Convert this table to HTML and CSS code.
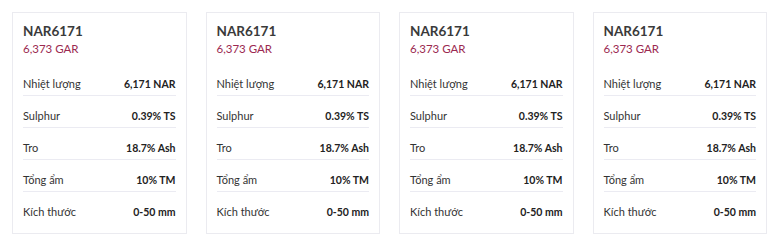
FILE: index.html
```html
<!DOCTYPE html>
<html lang="vi">
<head>
<meta charset="utf-8">
<link rel="stylesheet" href="styles.css">
</head>
<body>
<div class="grid">
  <div class="card">
    <div class="title">NAR6171</div>
    <div class="sub">6,373 GAR</div>
    <div class="rows">
      <div class="row"><span class="k">Nhiệt lượng</span><span class="v">6,171 NAR</span></div>
      <div class="row"><span class="k">Sulphur</span><span class="v">0.39% TS</span></div>
      <div class="row"><span class="k">Tro</span><span class="v">18.7% Ash</span></div>
      <div class="row"><span class="k">Tổng ẩm</span><span class="v">10% TM</span></div>
      <div class="row"><span class="k">Kích thước</span><span class="v">0-50 mm</span></div>
    </div>
  </div>
  <div class="card">
    <div class="title">NAR6171</div>
    <div class="sub">6,373 GAR</div>
    <div class="rows">
      <div class="row"><span class="k">Nhiệt lượng</span><span class="v">6,171 NAR</span></div>
      <div class="row"><span class="k">Sulphur</span><span class="v">0.39% TS</span></div>
      <div class="row"><span class="k">Tro</span><span class="v">18.7% Ash</span></div>
      <div class="row"><span class="k">Tổng ẩm</span><span class="v">10% TM</span></div>
      <div class="row"><span class="k">Kích thước</span><span class="v">0-50 mm</span></div>
    </div>
  </div>
  <div class="card">
    <div class="title">NAR6171</div>
    <div class="sub">6,373 GAR</div>
    <div class="rows">
      <div class="row"><span class="k">Nhiệt lượng</span><span class="v">6,171 NAR</span></div>
      <div class="row"><span class="k">Sulphur</span><span class="v">0.39% TS</span></div>
      <div class="row"><span class="k">Tro</span><span class="v">18.7% Ash</span></div>
      <div class="row"><span class="k">Tổng ẩm</span><span class="v">10% TM</span></div>
      <div class="row"><span class="k">Kích thước</span><span class="v">0-50 mm</span></div>
    </div>
  </div>
  <div class="card">
    <div class="title">NAR6171</div>
    <div class="sub">6,373 GAR</div>
    <div class="rows">
      <div class="row"><span class="k">Nhiệt lượng</span><span class="v">6,171 NAR</span></div>
      <div class="row"><span class="k">Sulphur</span><span class="v">0.39% TS</span></div>
      <div class="row"><span class="k">Tro</span><span class="v">18.7% Ash</span></div>
      <div class="row"><span class="k">Tổng ẩm</span><span class="v">10% TM</span></div>
      <div class="row"><span class="k">Kích thước</span><span class="v">0-50 mm</span></div>
    </div>
  </div>
</div>
</body>
</html>
```
FILE: styles.css
```css
html, body {
  margin: 0;
  padding: 0;
  background: #ffffff;
}
body {
  font-family: "Lato", "Open Sans", "Liberation Sans", sans-serif;
  color: #222;
}
.grid {
  display: grid;
  grid-template-columns: repeat(4, 1fr);
  gap: 19px;
  padding: 12px 11px 0 12px;
}
.card {
  border: 1px solid #ebebf0;
  padding: 8px 10px 10px 10px;
}
.title {
  font-size: 13.5px;
  font-weight: 700;
  line-height: 20px;
  color: #3a3a3a;
}
.sub {
  font-size: 11.5px;
  line-height: 16px;
  color: #9b2950;
}
.rows {
  margin-top: 7px;
}
.row {
  display: flex;
  justify-content: space-between;
  align-items: center;
  font-size: 10.5px;
  line-height: 16px;
  padding: 12px 0 3px 0;
  border-bottom: 1px solid #ebebf2;
}
.row:last-child {
  border-bottom: none;
}
.k {
  color: #333;
  font-size: 11px;
}
.v {
  font-weight: 700;
  color: #222;
}
```
